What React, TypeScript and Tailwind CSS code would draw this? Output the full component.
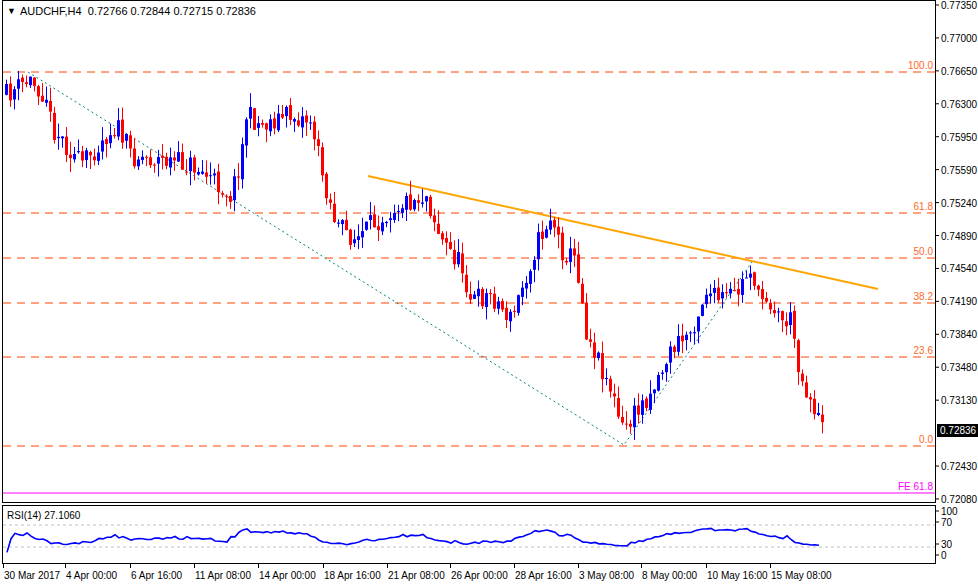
import { useMemo } from 'react';

// key points of the close path, in page pixels
const KEYS: [number, number][] = [
  [5, 95], [28, 80], [45, 95], [50, 125], [80, 165], [105, 135], [115, 125], [130, 155], [160, 160],
  [190, 165], [205, 175], [230, 195], [240, 155], [245, 115], [260, 125], [285, 115], [310, 120],
  [320, 170], [335, 225], [355, 240], [370, 225], [395, 205], [425, 195], [440, 240], [460, 265],
  [470, 300], [490, 295], [510, 320], [520, 290], [535, 245], [550, 215], [560, 250], [575, 260],
  [585, 330], [610, 390], [620, 430], [630, 420], [650, 390], [670, 350], [690, 330], [705, 290],
  [715, 300], [735, 295], [750, 265], [757, 300], [765, 295], [780, 320], [790, 320], [800, 380],
  [810, 400], [822, 432],
];

const PRICES = ['0.77350', '0.77000', '0.76650', '0.76300', '0.75950', '0.75590', '0.75240', '0.74890', '0.74540', '0.74190', '0.73840', '0.73480', '0.73130', '0.72780', '0.72430', '0.72080'];

const FIBS: [string, number][] = [['100.0', 72], ['61.8', 213], ['50.0', 258], ['38.2', 303], ['23.6', 357], ['0.0', 446]];

const TIMES: [string, number][] = [
  ['30 Mar 2017', 3], ['4 Apr 00:00', 65], ['6 Apr 16:00', 130], ['11 Apr 08:00', 194], ['14 Apr 00:00', 258],
  ['18 Apr 16:00', 323], ['21 Apr 08:00', 387], ['26 Apr 00:00', 450], ['28 Apr 16:00', 514],
  ['3 May 08:00', 578], ['8 May 00:00', 641], ['10 May 16:00', 706], ['15 May 08:00', 770],
];

function interp(x: number) {
  for (let i = 1; i < KEYS.length; i++) {
    const [x0, y0] = KEYS[i - 1];
    const [x1, y1] = KEYS[i];
    if (x <= x1) return y0 + ((y1 - y0) * (x - x0)) / (x1 - x0);
  }
  return KEYS[KEYS.length - 1][1];
}

function useCandles() {
  return useMemo(() => {
    let seed = 11;
    const rnd = () => {
      seed = (seed * 16807) % 2147483647;
      return seed / 2147483647;
    };
    const out: { x: number; o: number; c: number; h: number; l: number }[] = [];
    let prev = interp(5);
    for (let x = 5; x <= 822; x += 4) {
      const c = interp(x) + (rnd() - 0.5) * 22;
      const o = prev + (rnd() - 0.5) * 4;
      const h = Math.min(o, c) - rnd() * 14;
      const l = Math.max(o, c) + rnd() * 14;
      out.push({ x, o, c, h, l });
      prev = c;
    }
    return out;
  }, []);
}

function rsiLine(closes: number[]) {
  // closes in pixels: lower y = higher price
  const pts: string[] = [];
  let ag = 0, al = 0;
  for (let i = 1; i < closes.length; i++) {
    const d = closes[i - 1] - closes[i];
    const g = Math.max(d, 0), l = Math.max(-d, 0);
    if (i <= 14) { ag += g / 14; al += l / 14; } else { ag = (ag * 13 + g) / 14; al = (al * 13 + l) / 14; }
    const raw = al === 0 ? 100 : 100 - 100 / (1 + ag / al);
    const rsi = 50 + (raw - 50) * 0.75;
    pts.push(`${3 + i * 4},${557 - rsi * 0.45}`);
  }
  return pts.join(' ');
}

export default function App() {
  const candles = useCandles();
  const rsi = rsiLine(candles.map((c) => c.c));

  return (
    <div className="relative h-[585px] w-[978px] overflow-hidden bg-white text-[11px] text-black" style={{ fontFamily: '"Liberation Sans", Tahoma, sans-serif' }}>
      <div className="flex">
        <div className="relative ml-[2px] h-[503px] w-[934px] border border-black">
          <div className="absolute left-[4px] top-[2px] flex items-center gap-1">
            <span className="text-[9px]">▼</span>
            <span>AUDCHF,H4&nbsp;&nbsp;0.72766 0.72844 0.72715 0.72836</span>
          </div>
          <svg width="932" height="501" viewBox="3 1 932 501" className="block">
            {FIBS.map(([label, y]) => (
              <g key={label}>
                <line x1="3" x2="935" y1={y} y2={y} stroke="#ff4500" strokeDasharray="8 6" />
                <text x="933" y={y - 3} textAnchor="end" fill="#ff6a2a" fontSize="10">{label}</text>
              </g>
            ))}
            <line x1="3" x2="935" y1="493" y2="493" stroke="#ff00ff" />
            <text x="933" y="490" textAnchor="end" fill="#ff00ff" fontSize="10">FE 61.8</text>
            <polyline points="28,72 624,445 752,262" fill="none" stroke="#008080" strokeDasharray="2 3" />
            <line x1="368" y1="176" x2="878" y2="289" stroke="#ffa500" strokeWidth="2" />
            {candles.map((k) => {
              const up = k.c < k.o;
              const col = up ? '#0000ff' : '#ff0000';
              return (
                <g key={k.x}>
                  <line x1={k.x + 1.5} x2={k.x + 1.5} y1={k.h} y2={k.l} stroke={col} />
                  <rect x={k.x} y={Math.min(k.o, k.c)} width="3" height={Math.max(1, Math.abs(k.o - k.c))} fill={col} />
                </g>
              );
            })}
          </svg>
        </div>
        <svg width="42" height="503" className="block overflow-visible">
          {PRICES.map((p, i) =>
            i === 13 ? null : (
              <g key={p}>
                <line x1="0" x2="3" y1={5 + i * 32.93} y2={5 + i * 32.93} stroke="black" />
                <text x="5" y={9 + i * 32.93} fontSize="10">{p}</text>
              </g>
            ),
          )}
          <rect x="1" y="424" width="41" height="13" fill="black" />
          <text x="4" y="434" fontSize="10" fill="white">0.72836</text>
        </svg>
      </div>
      <div className="mt-[2px] flex">
        <div className="relative ml-[2px] h-[59px] w-[934px] border border-black">
          <span className="absolute left-[4px] top-[2px] text-[10px]">RSI(14) 27.1060</span>
          <svg width="932" height="57" viewBox="3 505 932 57" className="block">
            <line x1="3" x2="935" y1="524" y2="524" stroke="#c0c0c0" strokeDasharray="3 3" />
            <line x1="3" x2="935" y1="546" y2="546" stroke="#c0c0c0" strokeDasharray="3 3" />
            <polyline points={rsi} fill="none" stroke="#0000ff" strokeWidth="1.6" />
          </svg>
        </div>
        <svg width="42" height="59" className="block">
          {[['100', 10], ['70', 21], ['30', 43], ['0', 54]].map(([t, y]) => (
            <g key={t}>
              <line x1="0" x2="3" y1={Number(y) - 4} y2={Number(y) - 4} stroke="black" />
              <text x="5" y={y} fontSize="10">{t}</text>
            </g>
          ))}
        </svg>
      </div>
      <div className="relative h-[20px] text-[10px]">
        {TIMES.map(([t, x]) => (
          <div key={t} className="absolute top-[4px]" style={{ left: x }}>
            <div className="absolute -top-[4px] left-0 h-[4px] w-px bg-black" />
            <span className="whitespace-nowrap pl-[1px]">{t}</span>
          </div>
        ))}
      </div>
    </div>
  );
}
